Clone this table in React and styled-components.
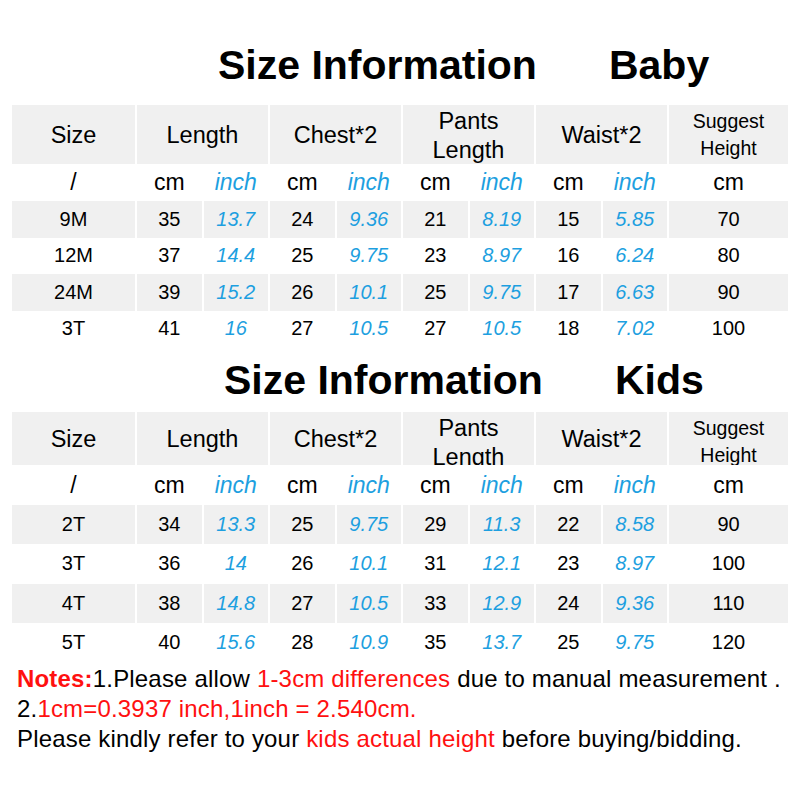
import styled, { createGlobalStyle } from "styled-components";

const GlobalStyle = createGlobalStyle`
  body {
    margin: 0;
    background: #ffffff;
    font-family: "Liberation Sans", Arial, sans-serif;
    color: #000000;
  }
`;

const colors = {
  gray: "#f0f0f0",
  blue: "#1d9fe0",
  red: "#ff1010",
};

const baby = {
  title: "Baby",
  indent: 218,
  top: 42,
  gap: 17,
  headH: 59,
  unitH: 37,
  rowH: 36.5,
  rows: [
    ["9M", 35, "13.7", 24, "9.36", 21, "8.19", 15, "5.85", 70],
    ["12M", 37, "14.4", 25, "9.75", 23, "8.97", 16, "6.24", 80],
    ["24M", 39, "15.2", 26, "10.1", 25, "9.75", 17, "6.63", 90],
    ["3T", 41, "16", 27, "10.5", 27, "10.5", 18, "7.02", 100],
  ],
};

const kids = {
  title: "Kids",
  indent: 224,
  top: 10,
  gap: 9,
  headH: 53,
  unitH: 40,
  rowH: 39.25,
  rows: [
    ["2T", 34, "13.3", 25, "9.75", 29, "11.3", 22, "8.58", 90],
    ["3T", 36, "14", 26, "10.1", 31, "12.1", 23, "8.97", 100],
    ["4T", 38, "14.8", 27, "10.5", 33, "12.9", 24, "9.36", 110],
    ["5T", 40, "15.6", 28, "10.9", 35, "13.7", 25, "9.75", 120],
  ],
};

const SizeTable = ({ data }) => (
  <Section>
    <Title $indent={data.indent} $top={data.top}>
      <span>Size Information</span>
      <span>{data.title}</span>
    </Title>
    <Table $gap={data.gap}>
      <Row $h={data.headH} $shade>
        <HeadCell>Size</HeadCell>
        <HeadCell $span={2}>Length</HeadCell>
        <HeadCell $span={2}>Chest*2</HeadCell>
        <HeadCell $span={2} $lines>
          Pants
          <br />
          Length
        </HeadCell>
        <HeadCell $span={2}>Waist*2</HeadCell>
        <HeadCell $small $lines>
          Suggest
          <br />
          Height
        </HeadCell>
      </Row>
      <Row $h={data.unitH}>
        <UnitCell>/</UnitCell>
        {[0, 1, 2, 3].map((i) => [
          <UnitCell key={"c" + i}>cm</UnitCell>,
          <UnitCell key={"i" + i} $inch>
            inch
          </UnitCell>,
        ])}
        <UnitCell>cm</UnitCell>
      </Row>
      {data.rows.map((r, ri) => (
        <Row key={r[0]} $h={data.rowH} $shade={ri % 2 === 0}>
          {r.map((v, ci) => (
            <Cell key={ci} $inch={ci > 0 && ci < 9 && ci % 2 === 0}>
              {v}
            </Cell>
          ))}
        </Row>
      ))}
    </Table>
  </Section>
);

export default function App() {
  return (
    <Page>
      <GlobalStyle />
      <SizeTable data={baby} />
      <SizeTable data={kids} />
      <Notes>
        <p>
          <Red as="b">Notes:</Red>1.Please allow <Red>1-3cm differences</Red>{" "}
          due to manual measurement .
        </p>
        <p>
          2.<Red>1cm=0.3937 inch,1inch = 2.540cm.</Red>
        </p>
        <p>
          Please kindly refer to your <Red>kids actual height</Red> before
          buying/bidding.
        </p>
      </Notes>
    </Page>
  );
}

const Page = styled.div`
  width: 800px;
  height: 800px;
  background: #ffffff;
  overflow: hidden;
`;

const Section = styled.section`
  display: flex;
  flex-direction: column;
`;

const Title = styled.h1`
  margin: ${(p) => p.$top}px 0 0;
  padding-left: ${(p) => p.$indent}px;
  display: flex;
  gap: 72px;
  font-size: 41px;
  line-height: 46px;
  font-weight: 700;
  height: 46px;
`;

const Table = styled.div`
  margin: ${(p) => p.$gap}px 0 0 12px;
  width: 776px;
  display: flex;
  flex-direction: column;
`;

const Row = styled.div`
  display: grid;
  grid-template-columns: 123px repeat(8, 64.5px) 119px;
  column-gap: 2px;
  height: ${(p) => p.$h}px;
  & > * {
    background: ${(p) => (p.$shade ? colors.gray : "transparent")};
  }
`;

const Cell = styled.div`
  display: flex;
  align-items: center;
  justify-content: center;
  font-size: 20px;
  color: ${(p) => (p.$inch ? colors.blue : "#000")};
  font-style: ${(p) => (p.$inch ? "italic" : "normal")};
`;

const UnitCell = styled(Cell)`
  font-size: 23px;
`;

const HeadCell = styled.div`
  grid-column: span ${(p) => p.$span || 1};
  display: flex;
  align-items: ${(p) => (p.$lines ? "flex-start" : "center")};
  justify-content: center;
  padding-top: ${(p) => (p.$lines ? (p.$small ? 3 : 2) : 0)}px;
  box-sizing: border-box;
  text-align: center;
  overflow: hidden;
  font-size: ${(p) => (p.$small ? 19.5 : 23.5)}px;
  line-height: ${(p) => (p.$small ? 27 : p.$lines ? 29 : 26)}px;
`;

const Notes = styled.div`
  margin-top: 2px;
  padding-left: 17px;
  font-size: 24px;
  line-height: 30px;
  letter-spacing: 0.18px;
  p {
    margin: 0;
    white-space: nowrap;
  }
`;

const Red = styled.span`
  color: ${colors.red};
`;
